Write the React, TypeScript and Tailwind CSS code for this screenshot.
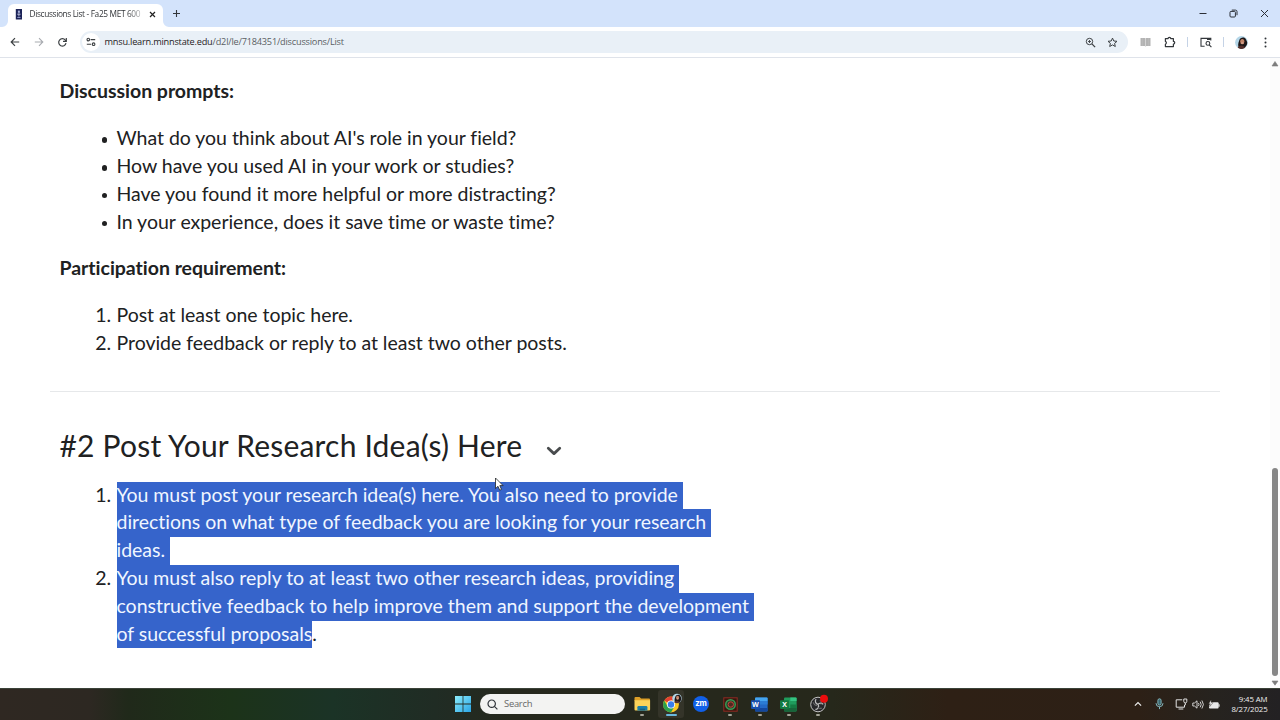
import type { ReactNode } from 'react'

const prompts = [
  "What do you think about AI's role in your field?",
  'How have you used AI in your work or studies?',
  'Have you found it more helpful or more distracting?',
  'In your experience, does it save time or waste time?',
]

const requirements = [
  'Post at least one topic here.',
  'Provide feedback or reply to at least two other posts.',
]

function TabStrip() {
  return (
    <div className="flex h-[27px] items-end bg-[#d3e3fb]">
      <div className="relative ml-2 flex h-[23px] w-[155px] items-center rounded-t-[6px] bg-white pb-[3px] pl-[7px]">
        <svg className="absolute -left-[6px] bottom-0" width="6" height="6" viewBox="0 0 6 6">
          <path d="M6 0v6H0a6 6 0 0 0 6-6z" fill="#fff" />
        </svg>
        <svg className="absolute -right-[6px] bottom-0" width="6" height="6" viewBox="0 0 6 6">
          <path d="M0 0v6h6a6 6 0 0 1-6-6z" fill="#fff" />
        </svg>
        <svg width="8" height="11" viewBox="0 0 8 11">
          <rect x="0.8" width="6.2" height="10.5" fill="#1c2358" />
          <rect x="2.9" y="1.6" width="2" height="2.2" fill="#aab2dc" />
          <path d="M2.2 5.2h3.4M3.9 4.4v3" stroke="#cfd4ee" strokeWidth="0.8" />
          <rect x="2.3" y="8" width="3.2" height="1" fill="#8a93c4" />
        </svg>
        <span className="mt-px ml-[6.5px] w-[113px] bg-linear-to-r from-[#2a2d31] from-86% to-[#2a2d31]/20 bg-clip-text text-[8.3px] tracking-[-0.34px] whitespace-nowrap text-transparent">
          Discussions List - Fa25 MET 600
        </span>
        <svg className="ml-[6px]" width="7" height="7" viewBox="0 0 7 7">
          <path d="M1 1l5 5M6 1L1 6" stroke="#222" strokeWidth="1.2" />
        </svg>
      </div>
      <svg className="mb-[9px] ml-[9px]" width="9" height="9" viewBox="0 0 9 9">
        <path d="M4.5 1v7M1 4.5h7" stroke="#33373c" strokeWidth="1.1" />
      </svg>
      <div className="mb-[9px] ml-auto flex items-center gap-[22px] pr-[11px]">
        <svg width="8" height="9" viewBox="0 0 8 9">
          <path d="M0.5 4.5h7" stroke="#2b2f36" />
        </svg>
        <svg width="9" height="9" viewBox="0 0 9 9" fill="none" stroke="#2b2f36">
          <rect x="1" y="2.4" width="5.4" height="5.6" rx="1" />
          <path d="M2.8 1.1h3.7a1.5 1.5 0 0 1 1.5 1.5v3.6" />
        </svg>
        <svg width="9" height="9" viewBox="0 0 9 9">
          <path d="M1 1l7 7M8 1L1 8" stroke="#2b2f36" />
        </svg>
      </div>
    </div>
  )
}

function Toolbar() {
  return (
    <div className="flex h-[31px] items-center border-b border-[#dfe3ea] bg-white pl-[10px]">
      <svg width="10" height="10" viewBox="0 0 10 10" fill="none" stroke="#3c4043" strokeWidth="1.2">
        <path d="M9.2 5H1.4M5 1.2L1.2 5 5 8.8" />
      </svg>
      <svg className="ml-[14px]" width="10" height="10" viewBox="0 0 10 10" fill="none" stroke="#a8abb0" strokeWidth="1.1">
        <path d="M0.8 5h7.8M5 1.2L8.8 5 5 8.8" />
      </svg>
      <svg className="ml-[13px]" width="11" height="11" viewBox="0 0 11 11" fill="none" stroke="#3c4043" strokeWidth="1.2">
        <path d="M9 6.2A3.7 3.7 0 1 1 8.3 3.1L9 4" />
        <path d="M9.3 1v3.3H6" />
      </svg>
      <div className="ml-[12px] flex h-[22px] w-[1048px] items-center rounded-full bg-[#e9f0f7] pl-[2px]">
        <div className="flex h-[18px] w-[18px] items-center justify-center rounded-full bg-white">
          <svg width="10" height="10" viewBox="0 0 10 10" fill="none" stroke="#3c4043" strokeWidth="1.1">
            <circle cx="2.3" cy="2.6" r="1.3" />
            <path d="M4.6 2.6h4.6M0.8 7.2h4.4" />
            <circle cx="7.6" cy="7.2" r="1.3" />
          </svg>
        </div>
        <span className="ml-[4.5px] text-[9.2px] tracking-[-0.21px] whitespace-nowrap text-[#5a5e63]">
          <span className="text-[#1f2124]">mnsu.learn.minnstate.edu</span>/d2l/le/7184351/discussions/List
        </span>
        <svg className="ml-auto" width="11" height="11" viewBox="0 0 11 11" fill="none" stroke="#3c4043">
          <circle cx="4.5" cy="4.5" r="3.2" />
          <path d="M6.9 6.9l3.2 3.2" strokeWidth="1.3" />
          <path d="M3 4.5h3M4.5 3v3" strokeWidth="0.9" />
        </svg>
        <svg className="mr-[10px] ml-[11px]" width="11" height="11" viewBox="0 0 11 11" fill="none" stroke="#3c4043">
          <path d="M5.5 1.1l1.3 2.9 3.2.3-2.4 2.1.7 3.1-2.8-1.6-2.8 1.6.7-3.1L1 4.3 4.2 4z" />
        </svg>
      </div>
      <svg className="ml-[12px]" width="11" height="10" viewBox="0 0 11 10">
        <path d="M0.5 1h4.2l.8.6.8-.6h4.2v8H6.3l-.8.4-.8-.4H.5z" fill="#b3b3b3" />
        <path d="M5.5 1.2v8" stroke="#e2e2e2" strokeWidth="0.7" />
        <path d="M2.6 1v8M8.4 1v8" stroke="#c2c2c2" strokeWidth="0.5" />
      </svg>
      <svg className="ml-[13px]" width="12" height="12" viewBox="0 0 12 12" fill="none" stroke="#33373b" strokeWidth="1.2">
        <path d="M1.4 2.6h2.7a1.3 1.3 0 0 1 2.6 0h2.7v2.8a1.3 1.3 0 0 1 0 2.6v2.6h-8V8.2a1.5 1.5 0 0 0 0-2.8z" strokeLinejoin="round" />
      </svg>
      <div className="ml-[11px] h-[10px] w-px bg-[#c5d3e6]" />
      <svg className="ml-[12px]" width="12" height="11" viewBox="0 0 12 11" fill="none" stroke="#33373b" strokeWidth="1.1">
        <path d="M4.6 9.2H1V1.4h9.8v2.2" />
        <path d="M7 2.2h3.8" strokeWidth="1.6" />
        <circle cx="7.9" cy="6.4" r="1.9" />
        <path d="M9.2 7.8l2.2 2.4" />
      </svg>
      <div className="ml-[11px] h-[10px] w-px bg-[#c5d3e6]" />
      <svg className="ml-[11px]" width="13" height="13" viewBox="0 0 13 13">
        <Portrait />
      </svg>
      <svg className="ml-[16px]" width="3" height="11" viewBox="0 0 3 11" fill="#303439">
        <circle cx="1.5" cy="1.4" r="1" />
        <circle cx="1.5" cy="5.5" r="1" />
        <circle cx="1.5" cy="9.6" r="1" />
      </svg>
    </div>
  )
}

function Portrait() {
  return (
    <>
      <circle cx="6.5" cy="6.5" r="6.4" fill="#b4d6e8" />
      <path d="M4 11.9C2.600 9.500 3.200 7 4.200 4.400 5.200 1.200 9.600.6 11 3.400a6.400 6.400 0 0 1-1 8.200z" fill="#1d1718" />
      <ellipse cx="7.3" cy="5.6" rx="2.100" ry="2.700" fill="#c48468" />
      <path d="M2.600 11.600c2-2.600 5.200-2.800 7.600.1a6.400 6.400 0 0 1-7.600-.1z" fill="#54302c" />
      <path d="M6.300 7h2" stroke="#f3dfd8" strokeWidth="0.6" />
    </>
  )
}

function Selected({ children }: { children: ReactNode }) {
  return (
    <span className="inline-block h-full bg-[#3664cb] text-[#f0f6ff]">
      <span className="relative -top-px">{children}</span>
    </span>
  )
}

function Line({ children }: { children: ReactNode }) {
  return <div className="h-[27.8px] whitespace-pre">{children}</div>
}

function NumberedItem({ n, children }: { n: number; children: ReactNode }) {
  return (
    <li className="flex">
      <span className="-mt-px w-[57px] pr-[5.5px] text-right">{n}.</span>
      <div>{children}</div>
    </li>
  )
}

function Content() {
  return (
    <div className="flex h-[630px] bg-white">
      <div className="flex-1 pt-[19px] pr-[50px] pl-[50px] font-['Lato',sans-serif] text-[19.5px] leading-[27.8px] tracking-[-0.025px] text-[#202122]">
        <div className="pl-[9.5px]">
          <p className="font-bold">Discussion prompts:</p>
          <ul className="mt-[19.4px]">
            {prompts.map((text) => (
              <li key={text} className="flex items-center">
                <span className="mt-[4px] mr-[9.500px] ml-[42px] h-[5.500px] w-[5.500px] rounded-full bg-[#202122]" />
                {text}
              </li>
            ))}
          </ul>
          <p className="mt-[18.6px] font-bold">Participation requirement:</p>
          <ol className="mt-[19.2px]">
            {requirements.map((text, i) => (
              <li key={text} className="flex">
                <span className="w-[57px] pr-[5.5px] text-right">{i + 1}.</span>
                {text}
              </li>
            ))}
          </ol>
        </div>
        <hr className="mt-[34px] border-[#e6e8ea]" />
        <div className="pl-[9.5px]">
          <div className="mt-[33px] flex h-[40px] items-center">
            <h2 className="text-[30px] leading-[40px] tracking-[0.2px] whitespace-nowrap">#2 Post Your Research Idea(s) Here</h2>
            <svg className="mt-[13px] ml-[24px]" width="16" height="10" viewBox="0 0 16 10">
              <path d="M2.300 2.300L8 7.600l5.700-5.300" fill="none" stroke="#494c4e" strokeWidth="2.8" strokeLinecap="round" strokeLinejoin="round" />
            </svg>
          </div>
          <ol className="mt-[17px]">
            <NumberedItem n={1}>
              <Line><Selected>You must post your research idea(s) here. You also need to provide </Selected></Line>
              <Line><Selected>directions on what type of feedback you are looking for your research </Selected></Line>
              <Line><Selected>ideas. </Selected></Line>
            </NumberedItem>
            <NumberedItem n={2}>
              <Line><Selected>You must also reply to at least two other research ideas, providing </Selected></Line>
              <Line><Selected>constructive feedback to help improve them and support the development </Selected></Line>
              <Line><Selected>of successful proposals</Selected><span className="relative -top-px">.</span></Line>
            </NumberedItem>
          </ol>
        </div>
      </div>
      <div className="flex w-[10px] flex-col items-center bg-[#fcfcfc] pt-[3px] pb-[2px]">
        <svg width="8" height="6" viewBox="0 0 8 6">
          <path d="M4 .5L7 5H1z" fill="#7d7d7d" stroke="#7d7d7d" strokeWidth="0.6" strokeLinejoin="round" />
        </svg>
        <div className="mt-auto h-[208px] w-[6px] rounded-full bg-[#868686]" />
        <svg className="mt-[4px]" width="8" height="6" viewBox="0 0 8 6">
          <path d="M4 5.2L7 1H1z" fill="#7d7d7d" stroke="#7d7d7d" strokeWidth="0.6" strokeLinejoin="round" />
        </svg>
      </div>
    </div>
  )
}

function TaskItem({ children, active, running }: { children: ReactNode; active?: boolean; running?: boolean }) {
  return (
    <div className={active ? 'flex h-[28px] w-[26px] flex-col items-center rounded-[3px] bg-[#343429]' : 'flex h-[28px] w-[26px] flex-col items-center'}>
      <div className="flex h-[24px] items-center pt-[4px]">{children}</div>
      {active && <div className="h-[2px] w-[11px] rounded-full bg-[#6ab8de]" />}
      {running && <div className="h-[2px] w-[4px] rounded-full bg-[#a3a397]" />}
    </div>
  )
}

function Taskbar() {
  return (
    <div className="flex h-[32px] items-center border-t border-[#3b4238] bg-[linear-gradient(90deg,#2f2822_0%,#2d2822_7%,#20291a_10%,#1c3319_18%,#1b3326_26%,#202c24_34%,#26281e_40%,#26281b_65%,#2e2015_74%,#2d2016_89%,#26231f_95%,#232123_100%)] pb-px">
      <svg className="ml-[455px]" width="16" height="16" viewBox="0 0 16 16">
        <defs>
          <linearGradient id="win" x1="0" y1="0" x2="1" y2="1">
            <stop offset="0" stopColor="#8cecfb" />
            <stop offset="1" stopColor="#2aa5e6" />
          </linearGradient>
        </defs>
        <path d="M0 0h7.6v7.6H0zM8.4 0H16v7.6H8.4zM0 8.4h7.6V16H0zM8.4 8.4H16V16H8.4z" fill="url(#win)" />
      </svg>
      <div className="ml-[9px] flex h-[20px] w-[145px] items-center rounded-full bg-[#f3f3f2] pl-[7px]">
        <svg width="11" height="11" viewBox="0 0 11 11" fill="none" stroke="#30343a" strokeWidth="1.2">
          <circle cx="4.7" cy="4.7" r="3.7" />
          <path d="M7.4 7.4l3 3" />
        </svg>
        <span className="ml-[6px] text-[9.4px] tracking-[-0.25px] text-[#686868]">Search</span>
      </div>
      <div className="ml-[4px] flex items-center gap-[3.4px]">
        <TaskItem running>
          <svg width="17" height="16" viewBox="0 0 17 16">
            <path d="M.5 2q0-1 1-1h4l1.6 1.6H15q1 0 1 1V5H.5z" fill="#dda028" />
            <path d="M.5 4.2h15.6v9.3q0 .9-1 .9H1.5q-1 0-1-.9z" fill="#fbd35a" />
            <path d="M3.4 14.4v-3.2q0-1.2 1.2-1.2h7.6q1.2 0 1.2 1.2v3.2z" fill="#1b7ea8" />
            <path d="M5.8 14.4v-1.7h5.2v1.7z" fill="#156184" />
          </svg>
        </TaskItem>
        <TaskItem active>
          <svg className="-mt-[2px]" width="21" height="20" viewBox="0 0 21 20">
            <circle cx="10" cy="11.5" r="7.900" fill="#fbc723" />
            <path d="M10 11.500L3.160 7.550a7.900 7.900 0 0 1 13.680 0H10z" fill="#e34133" />
            <path d="M3.160 7.550a7.900 7.900 0 0 0 6.840 11.850l3.420-5.900L10 11.500l-3.420 2z" fill="#2ca14c" />
            <circle cx="10" cy="11.500" r="4" fill="#fff" />
            <circle cx="10" cy="11.500" r="3.200" fill="#3a7eea" />
            <g transform="translate(11.200 .6) scale(.74)">
              <Portrait />
            </g>
          </svg>
        </TaskItem>
        <TaskItem>
          <div className="flex h-[16px] w-[16px] items-center justify-center rounded-full bg-[#1160e8] pb-[2px] font-['Inter',sans-serif] text-[8px] leading-none font-bold tracking-[-0.3px] text-white">
            zm
          </div>
        </TaskItem>
        <TaskItem running>
          <svg width="15" height="15" viewBox="0 0 15 15">
            <rect x=".8" y=".8" width="13.4" height="13.4" fill="#35170f" stroke="#8e2b22" strokeWidth="1" />
            <circle cx="7.5" cy="7.5" r="4.800" fill="#28402a" stroke="#3b9a55" strokeWidth="1.4" />
            <circle cx="7.8" cy="7.5" r="2.7" fill="#4b2a20" stroke="#c8433b" strokeWidth="1" />
          </svg>
        </TaskItem>
        <TaskItem running>
          <svg width="17" height="15" viewBox="0 0 17 15">
            <rect x="4" y=".4" width="12.6" height="14.2" rx="1" fill="#2368c4" />
            <path d="M4 1.4q0-1 1-1h10.600q1 0 1 1v2.600H4z" fill="#45a5ee" />
            <path d="M4 4h12.600v3.500H4z" fill="#2b7cd3" />
            <path d="M4 11h12.600v2.600q0 1-1 1H5q-1 0-1-1z" fill="#14479c" />
            <rect y="3.300" width="9" height="8.600" rx=".8" fill="#184fae" />
            <text x="4.500" y="10.200" textAnchor="middle" fontSize="7" fontWeight="700" fill="#fff">W</text>
          </svg>
        </TaskItem>
        <TaskItem running>
          <svg width="17" height="15" viewBox="0 0 17 15">
            <rect x="4" y=".4" width="12.600" height="14.200" rx="1" fill="#1f9c5c" />
            <path d="M10.300.4h5.300q1 0 1 1V4h-6.300z" fill="#35c482" />
            <path d="M10.300 7.500h6.300V11h-6.300z" fill="#157a42" />
            <path d="M4 11h12.600v2.600q0 1-1 1H5q-1 0-1-1z" fill="#17653a" />
            <rect y="3.300" width="9" height="8.600" rx=".8" fill="#127a41" />
            <text x="4.500" y="10.200" textAnchor="middle" fontSize="7" fontWeight="700" fill="#fff">X</text>
          </svg>
        </TaskItem>
        <TaskItem running>
          <svg width="20" height="20" viewBox="0 0 20 20">
            <circle cx="10" cy="10.500" r="7.300" fill="#27272a" stroke="#c3c3c3" strokeWidth="1" />
            <path d="M8.100 5.200a3.200 3.200 0 0 0 1.900 5.200M15.200 10.400a3.200 3.200 0 0 0-5.200 0M7.400 15.500a3.200 3.200 0 0 0 2.600-5.100" fill="none" stroke="#bcbcbc" strokeWidth="1.300" />
            <path d="M5.300 8.400q.6 3.200 3.600 3.200M12 6.200q2.500 1.700 1 4.300M13.800 14.200q-2.900 1-4-1.400" fill="none" stroke="#7f7f82" strokeWidth=".9" />
            <circle cx="16" cy="4.800" r="4" fill="#ec0d0d" />
          </svg>
        </TaskItem>
      </div>
      <svg className="ml-auto" width="8" height="6" viewBox="0 0 8 6">
        <path d="M.9 4.600L4 1.500l3.100 3.100" fill="none" stroke="#eee" strokeWidth="1.200" />
      </svg>
      <svg className="ml-[13px]" width="9" height="12" viewBox="0 0 9 12" fill="none" stroke="#83b4bb">
        <rect x="2.900" y=".8" width="3.200" height="6.200" rx="1.600" fill="#38646c" />
        <path d="M1 5.200a3.500 3.500 0 0 0 7 0M4.500 8.700v2.400" />
      </svg>
      <svg className="ml-[11px]" width="13" height="12" viewBox="0 0 13 12" fill="none" stroke="#e2e2e2">
        <path d="M7.200 1.800H1.200v7.400h8.300V6.800M3.500 11h4.800" />
        <path d="M8.800 1h3v2.400q0 1.500-1.500 1.500T8.800 3.400zM10.300 5v2.200" />
      </svg>
      <svg className="ml-[4px]" width="12" height="11" viewBox="0 0 12 11" fill="none" stroke="#e2e2e2" strokeWidth="0.900">
        <path d="M.8 4v3h1.700L5 9.200V1.800L2.500 4zM6.500 4q1 1.500 0 3M8.200 2.700q2 2.800 0 5.600M9.900 1.500q3 4 0 8" />
      </svg>
      <svg className="ml-[4px]" width="12" height="11" viewBox="0 0 12 11">
        <path d="M3 3.200h6.600q1 0 1 1v4.400q0 1-1 1H2q-1 0-1-1V6.600z" fill="#e9e9e9" />
        <path d="M11 5.200v2.500" stroke="#e9e9e9" strokeWidth="1.200" />
        <path d="M3.200.8L.6 4.800h1.900L1.700 7.600 5 3.700H3z" fill="#fff" stroke="#26211c" strokeWidth=".4" />
      </svg>
      <div className="mr-[12.500px] ml-[8px] w-[40px] text-right text-[7.800px] leading-[10.500px] tracking-[-0.1px] whitespace-nowrap text-[#f1f1f1]">
        <div>9:45 AM</div>
        <div>8/27/2025</div>
      </div>
    </div>
  )
}

export default function App() {
  return (
    <div className="relative h-[720px] w-[1280px] overflow-hidden bg-white font-['Open_Sans',sans-serif]">
      <TabStrip />
      <Toolbar />
      <Content />
      <Taskbar />
      <svg className="absolute top-[477px] left-[494px]" width="10" height="15" viewBox="0 0 10 15">
        <path d="M1.500 1v10.600l2.500-2.300 1.700 3.900 1.800-.8-1.700-3.800h3.300z" fill="#fff" stroke="#202326" strokeWidth=".8" />
      </svg>
    </div>
  )
}
